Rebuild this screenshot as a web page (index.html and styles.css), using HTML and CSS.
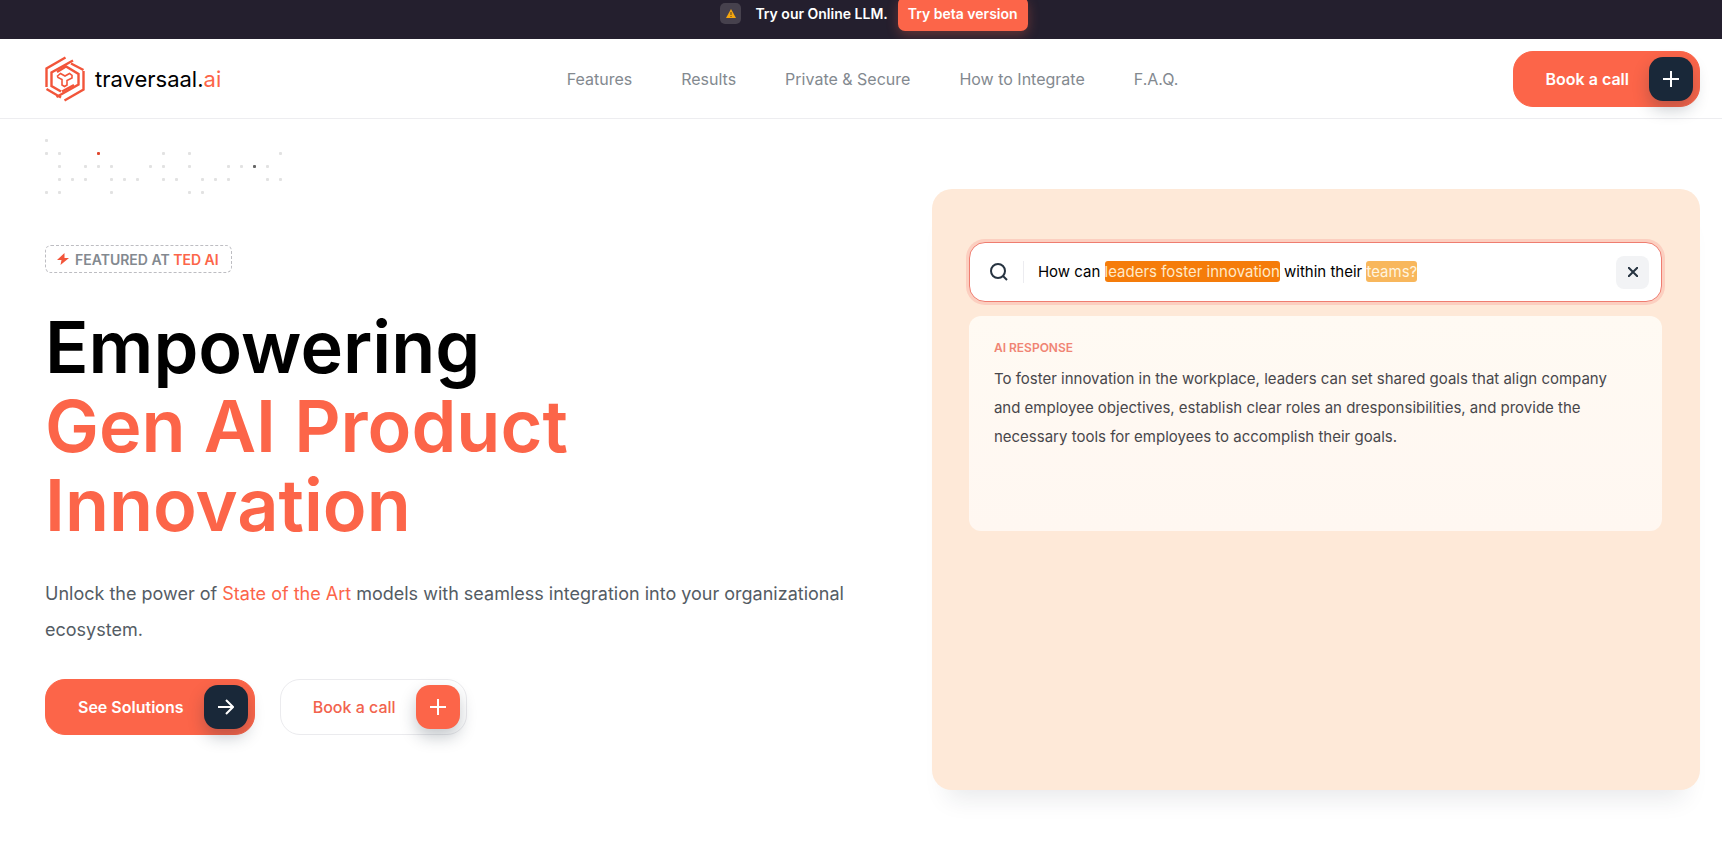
FILE: index.html
```html
<!DOCTYPE html>
<html lang="en">
<head>
  <meta charset="UTF-8">
  <meta name="viewport" content="width=device-width, initial-scale=1.0">
  <title>traversaal.ai</title>
  <link rel="stylesheet" href="styles.css">
</head>
<body>
  <div class="topbar">
    <span class="topbar-icon">
      <svg width="10" height="9" viewBox="0 0 10 9"><path d="M5 0 10 9H0Z" fill="#f5a60f"/><path d="M5 3v3M5 7v1" stroke="#5a4420"/></svg>
    </span>
    <span class="topbar-text">Try our Online LLM.</span>
    <a class="topbar-link" href="#beta">Try beta version</a>
  </div>

  <header class="header">
    <a class="logo" href="#">
      <svg width="40" height="46" viewBox="0 0 40 46" fill="none" stroke="#f2553a" stroke-width="2.4">
        <path d="M20.500 1.500 1.500 12.500V31"/>
        <path d="M28 4.500 6.500 16.500V30L16 35.500"/>
        <path d="M1.500 33 16 41.500"/>
        <path d="M19.500 44.500 38.500 33.500V15"/>
        <path d="M11.500 41 33.500 28.500V18L21 10.500 12 16"/>
        <path d="M38.500 14 26 7.500"/>
        <path d="M17 35.500 29 29"/>
        <path d="M12.500 20 15.500 17.500 20 20 24.500 17.500 27 19.500V22L22 24.500V29L19.500 30.500 17 29V23.500L13 21.500Z" stroke-width="1.6"/>
      </svg>
      <span class="logo-text">traversaal.<span class="accent">ai</span></span>
    </a>
    <nav class="nav">
      <a href="#features">Features</a>
      <a href="#results">Results</a>
      <a href="#private">Private &amp; Secure</a>
      <a href="#integrate">How to Integrate</a>
      <a href="#faq">F.A.Q.</a>
    </nav>
    <button class="btn btn-primary" type="button">
      Book a call
      <span class="btn-icon"><svg width="16" height="16" viewBox="0 0 16 16"><path d="M8 0v16M0 8h16"/></svg></span>
    </button>
  </header>

  <main class="hero">
    <div class="hero-text">
      <svg class="dots" width="240" height="56" viewBox="0 0 240 56">
        <g id="dots"></g>
      </svg>
      <div class="badge">
        <svg width="12" height="12" viewBox="0 0 12 12"><path d="M7.500 0 0 7h4.500L3.500 12 12 5H7.500Z" fill="#f2553a"/></svg>
        <span>FEATURED AT <span class="accent">TED AI</span></span>
      </div>
      <h1>Empowering<br><span class="accent">Gen AI Product<br>Innovation</span></h1>
      <p class="lead">Unlock the power of <span class="accent">State of the Art</span> models with seamless integration into your organizational ecosystem.</p>
      <div class="actions">
        <button class="btn btn-primary" type="button">
          See Solutions
          <span class="btn-icon"><svg width="16" height="16" viewBox="0 0 16 16"><path d="M0 8h15M8 1l7 7-7 7"/></svg></span>
        </button>
        <button class="btn btn-light" type="button">
          Book a call
          <span class="btn-icon"><svg width="16" height="16" viewBox="0 0 16 16"><path d="M8 0v16M0 8h16"/></svg></span>
        </button>
      </div>
    </div>

    <div class="demo">
      <div class="search">
        <svg class="search-icon" width="18" height="18" viewBox="0 0 18 18"><circle cx="8" cy="8" r="7"/><path d="M13 13l4 4"/></svg>
        <p class="query">How can <mark>leaders foster innovation</mark> within their <mark class="soft">teams?</mark></p>
        <button class="clear" type="button" aria-label="Clear"><svg width="10" height="10" viewBox="0 0 10 10"><path d="M0 0l10 10M10 0L0 10"/></svg></button>
      </div>
      <div class="response">
        <h2>AI RESPONSE</h2>
        <p>To foster innovation in the workplace, leaders can set shared goals that align company and employee objectives, establish clear roles an dresponsibilities, and provide the necessary tools for employees to accomplish their goals.</p>
      </div>
    </div>
  </main>

  <script>
    // columns that have a dot, row by row
    const rows = [
      [0],
      [0, 1, 4, 9, 11, 18],
      [1, 3, 4, 5, 8, 9, 11, 14, 15, 16, 17],
      [1, 2, 3, 5, 6, 7, 9, 10, 12, 13, 14, 17, 18],
      [0, 1, 5, 11, 12]
    ];
    const colors = { '1-4': '#e0492f', '2-16': '#666666' };
    let dots = '';
    rows.forEach((cols, row) => {
      cols.forEach((col) => {
        const color = colors[`${row}-${col}`] || '#e2e2e2';
        dots += `<rect x="${col * 13}" y="${row * 13}" width="3" height="3" rx="1" fill="${color}"/>`;
      });
    });
    document.getElementById('dots').innerHTML = dots;
  </script>
</body>
</html>
```
FILE: styles.css
```css
* {
  margin: 0;
  padding: 0;
  box-sizing: border-box;
}
body {
  font-family: Inter, 'Liberation Sans', sans-serif;
  background: #fff;
  color: #000;
}
a {
  color: inherit;
  text-decoration: none;
}
.accent { color: #fc6549; }
.topbar {
  display: flex;
  justify-content: center;
  align-items: center;
  height: 39px;
  padding: 0 0 12px 26px;
  overflow: hidden;
  background: #241f2e;
  color: #fff;
  font-size: 14px;
  font-weight: 600;
}
.topbar-icon {
  display: flex;
  align-items: center;
  justify-content: center;
  width: 21px;
  height: 21px;
  margin-right: 14px;
  border-radius: 5px;
  background: #46414d;
}
.topbar-link {
  margin-left: 10px;
  padding: 0 10px;
  line-height: 34px;
  border-radius: 7px;
  background: #fc6549;
  box-shadow: 0 4px 12px rgba(252, 101, 73, 0.3);
}
.header {
  display: grid;
  grid-template-columns: 1fr auto 1fr;
  align-items: center;
  height: 80px;
  padding: 0 22px 0 45px;
  border-bottom: 1px solid #ededf0;
}
.logo {
  display: flex;
  align-items: center;
  gap: 10px;
}
.logo-text {
  font-size: 22px;
  line-height: 28px;
}
.nav {
  display: flex;
  gap: 49px;
  color: #83898f;
  font-size: 16px;
}
.btn {
  display: flex;
  align-items: center;
  gap: 20px;
  height: 56px;
  padding: 0 6px 0 32px;
  border: 1px solid #fc6549;
  border-radius: 20px;
  font-family: inherit;
  font-size: 16px;
  font-weight: 600;
  cursor: pointer;
}
.header .btn { justify-self: end; }
.btn-primary {
  background: #fc6549;
  color: #fff;
}
.btn-light {
  background: #fff;
  border-color: #ebebee;
  color: #f2634d;
  font-weight: 500;
}
.btn-icon {
  display: flex;
  align-items: center;
  justify-content: center;
  width: 44px;
  height: 44px;
  border-radius: 14px;
  background: #192839;
  box-shadow: 0 8px 16px rgba(25, 40, 57, 0.25);
}
.btn-light .btn-icon { background: #fc6549; }
.btn-icon svg {
  fill: none;
  stroke: #fff;
  stroke-width: 2;
}
.hero {
  display: grid;
  grid-template-columns: minmax(0, 15fr) minmax(0, 14fr);
  gap: 64px;
  padding: 20px 22px 50px 45px;
}
.dots { display: block; }
.badge {
  display: inline-flex;
  align-items: center;
  gap: 6px;
  height: 28px;
  margin-top: 50px;
  padding: 0 12px 0 11px;
  border: 1px dashed #bdbdc2;
  border-radius: 6px;
  color: #83898f;
  font-size: 14px;
  font-weight: 600;
}
h1 {
  margin-top: 34px;
  font-size: 72px;
  font-weight: 600;
  line-height: 79px;
}
.lead {
  margin-top: 32px;
  color: #545c64;
  font-size: 18px;
  line-height: 36px;
}
.actions {
  display: flex;
  gap: 25px;
  margin-top: 31px;
}
.demo {
  height: 601px;
  margin-top: 50px;
  padding: 53px 38px 52px 37px;
  border-radius: 20px;
  background: #fee9d8;
  box-shadow: 0 24px 24px -16px rgba(25, 40, 57, 0.1);
}
.search {
  display: flex;
  align-items: center;
  height: 60px;
  padding: 0 12px 0 20px;
  border: 1px solid #ef7d70;
  border-radius: 16px;
  background: #fff;
  box-shadow: 0 0 0 3px #fccfc0;
}
.search svg {
  fill: none;
  stroke: #263340;
  stroke-width: 2;
}
.query {
  margin-left: 15px;
  padding-left: 14px;
  border-left: 1px solid #ececf0;
  font-size: 15px;
  line-height: 22px;
}
mark {
  padding: 1px 0;
  border-radius: 3px;
  background: #f57c0a;
  color: #ffe9c8;
}
mark.soft {
  background: #f8b75c;
  color: #fff4df;
}
.clear {
  display: flex;
  align-items: center;
  justify-content: center;
  width: 33px;
  height: 33px;
  margin-left: auto;
  border: none;
  border-radius: 8px;
  background: #f2f3f5;
}
.response {
  height: 215px;
  margin-top: 14px;
  padding: 24px 50px 24px 25px;
  border-radius: 12px;
  background: linear-gradient(#fffaf3, #fff7f1);
}
.response h2 {
  color: #f08474;
  font-size: 12px;
  font-weight: 600;
  line-height: 16px;
}
.response p {
  margin-top: 8px;
  color: #48474b;
  font-size: 15px;
  line-height: 29px;
}
```
